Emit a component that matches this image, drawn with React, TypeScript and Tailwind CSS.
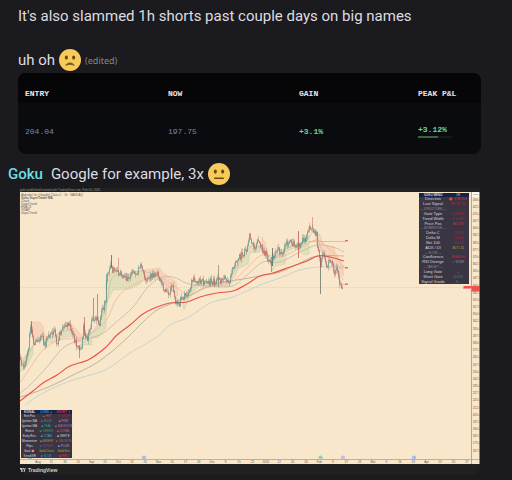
import React from "react";

type Pt = [number, number];

const price: Pt[] = [
  [20, 360], [25, 365], [29, 350], [31, 325], [34, 342], [42, 337], [46, 345], [49, 335], [55, 332], [57, 346],
  [62, 328], [69, 323], [73, 335], [78, 346], [82, 347], [84, 327], [88, 340], [93, 318], [97, 318], [100, 322],
  [103, 308], [106, 303], [107, 277], [111, 267], [115, 272], [120, 273], [127, 278], [131, 277], [133, 270],
  [136, 275], [141, 267], [143, 270], [146, 282], [152, 275], [157, 273], [160, 280], [163, 287], [168, 292],
  [173, 288], [176, 302], [178, 307], [182, 298], [187, 295], [193, 280], [200, 281], [210, 281], [218, 281],
  [223, 278], [230, 281], [233, 268], [238, 258], [243, 255], [248, 248], [250, 235], [254, 247], [258, 243],
  [263, 250], [268, 257], [271, 263], [273, 257], [278, 250], [283, 253], [287, 243], [295, 243], [299, 247],
  [303, 238], [306, 240], [308, 230], [312, 225], [314, 233], [317, 235], [318, 247], [321, 263], [324, 253],
  [327, 265], [331, 260], [335, 272], [338, 268], [340, 285], [343, 285],
];

const spikes = [
  [79, 345, 358, "#4f9a8f"], [111, 255, 268, "#5a4a44"], [118, 258, 272, "#d98478"], [218, 265, 287, "#8a7f72"],
  [298, 231, 258, "#c9483f"], [97, 294, 320, "#b2665c"], [93, 298, 318, "#6f7f75"], [312, 217, 228, "#d98478"],
  [271, 257, 272, "#4f9a8f"], [272, 248, 266, "#54504b"], [320, 257, 294, "#54645f"], [106, 274, 290, "#4f9a8f"],
  [31, 321, 334, "#c9483f"], [84, 317, 336, "#b2665c"],
] as const;

function priceAt(x: number): number {
  for (let i = 1; i < price.length; i++) {
    if (x <= price[i][0]) {
      const [x0, y0] = price[i - 1];
      const [x1, y1] = price[i];
      return y0 + ((y1 - y0) * (x - x0)) / (x1 - x0);
    }
  }
  return price[price.length - 1][1];
}

function noise(n: number): number {
  const v = Math.sin(n * 127.1) * 43758.5453;
  return v - Math.floor(v);
}

const candles = Array.from({ length: 323 }, (_, i) => {
  const x = 20.5 + i;
  const open = priceAt(x - 0.5) + (noise(i) - 0.5) * 7;
  const close = priceAt(x + 0.5) + (noise(i + 1) - 0.5) * 7;
  return {
    x,
    top: Math.min(open, close),
    bottom: Math.max(open, close) + 0.6,
    high: Math.min(open, close) - noise(i + 400) * 4,
    low: Math.max(open, close) + noise(i + 800) * 4,
    up: close < open,
  };
});

function curve(points: Pt[]): string {
  let d = `M${points[0][0]} ${points[0][1]}`;
  for (let i = 0; i < points.length - 1; i++) {
    const a = points[Math.max(0, i - 1)];
    const b = points[i];
    const c = points[i + 1];
    const e = points[Math.min(points.length - 1, i + 2)];
    d += `C${b[0] + (c[0] - a[0]) / 6} ${b[1] + (c[1] - a[1]) / 6} ${c[0] - (e[0] - b[0]) / 6} ${c[1] - (e[1] - b[1]) / 6} ${c[0]} ${c[1]}`;
  }
  return d;
}

const averages: { color: string; width: number; points: Pt[] }[] = [
  { color: "#c3d0cf", width: 0.9, points: [[25, 405], [43, 393], [70, 381], [105, 370], [130, 353], [157, 337], [170, 325], [189, 317], [210, 303], [233, 297], [260, 285], [280, 278], [300, 270], [320, 267], [344, 266]] },
  { color: "#b3a68f", width: 0.8, points: [[20, 397], [33, 393], [53, 385], [73, 375], [93, 365], [110, 353], [127, 338], [143, 322], [157, 310], [173, 303], [193, 294], [205, 288], [223, 282], [237, 280], [260, 276], [280, 272], [300, 263], [317, 256], [344, 256]] },
  { color: "#c4b69f", width: 0.8, points: [[20, 393], [30, 385], [47, 367], [63, 348], [80, 340], [100, 335], [113, 325], [133, 307], [147, 288], [160, 278], [173, 277], [189, 284], [205, 286], [232, 286], [247, 275], [263, 262], [280, 262], [300, 252], [317, 245], [333, 247], [344, 252]] },
  { color: "#f3b597", width: 0.8, points: [[20, 383], [30, 368], [43, 350], [60, 340], [83, 337], [105, 322], [117, 298], [133, 285], [157, 277], [173, 285], [189, 295], [205, 287], [230, 283], [247, 268], [262, 255], [280, 257], [300, 248], [317, 240], [330, 250], [344, 267]] },
  { color: "#c9b0bd", width: 0.6, points: [[20, 365], [30, 352], [36, 342], [50, 338], [70, 330], [82, 342], [97, 325], [106, 306], [112, 278], [125, 275], [141, 271], [158, 277], [172, 290], [180, 300], [195, 285], [230, 281], [240, 262], [252, 245], [265, 252], [273, 258], [290, 247], [306, 241], [314, 232], [322, 250], [334, 264], [343, 280]] },
  { color: "#ec5145", width: 1.1, points: [[20, 401], [33, 391], [43, 383], [57, 375], [70, 366], [88, 360], [105, 348], [117, 335], [130, 325], [143, 314], [157, 307], [170, 303], [187, 302], [200, 297], [217, 293], [233, 291], [247, 284], [260, 276], [273, 273], [290, 267], [307, 261], [318, 256], [330, 257], [344, 261]] },
];

const greenClouds = [
  "20,362 28,352 33,345 33,354 27,366 20,372",
  "44,342 56,335 68,328 72,336 62,338 52,343",
  "80,345 90,338 100,322 106,303 106,328 98,338 92,338 92,345 82,345",
  "106,285 112,272 125,276 141,270 145,276 140,284 130,289 113,290 107,303 106,315",
  "182,300 190,290 196,281 230,281 230,286 198,286 192,295 188,300 184,310",
  "231,278 238,262 250,247 260,245 260,252 250,253 248,264 236,270 231,280",
  "271,262 278,254 287,246 300,244 309,235 309,254 304,255 296,247 286,252 285,264 276,266 272,271",
];
const redClouds = [
  "31,322 40,322 43,327 44,334 48,338 40,340 33,340",
  "64,325 70,323 80,333 84,338 78,343 71,332",
  "144,270 160,268 163,273 168,276 176,282 178,296 170,290 160,280 146,279",
  "262,237 265,243 268,252 266,256 262,249",
  "314,230 320,235 323,245 334,247 335,252 342,264 344,276 337,270 328,258 318,249",
];

const months = ["Aug", "11", "18", "25", "Sep", "15", "Oct", "13", "20", "Nov", "10", "17", "24", "Dec", "8", "15", "22", "2026", "12", "20", "26", "Feb", "9", "17", "23", "Mar", "9", "16", "23", "Apr", "13", "20", "27"];

function PriceChart() {
  return (
    <svg
      viewBox="19 188 461 277"
      className="block h-auto w-full"
      role="img"
      aria-label="Google price chart"
      fontFamily="'Liberation Sans', Arial, sans-serif"
    >
      <rect x="19" y="188" width="461" height="277" fill="#202120" />
      <text x="20" y="190.5" fontSize="3" fill="#96938d">goku published/created with TradingView.com, Feb 04, 2026</text>
      <rect x="20" y="192" width="460" height="272" fill="#f8e7cb" />
      <g fontSize="3" fill="#67605a">
        <text x="21" y="195.8">Alphabet Inc (Google) Class C · 1h · NASDAQ</text>
        <text x="21" y="198.8" fontWeight="bold">Goku SuperTrader MA</text>
        <text x="21" y="201.8">Cloud</text>
        <text x="21" y="204.8">SuperTrend</text>
        <text x="21" y="207.8">EMA 21</text>
        <text x="21" y="210.8">VWAP</text>
        <text x="21" y="213.8">Gaps/Trend</text>
      </g>
      <path d="M20 287.5H471" stroke="#e9b8a1" strokeWidth="0.6" strokeDasharray="1 1" />
      {greenClouds.map((p) => (
        <polygon key={p} points={p} fill="#a9c88c" fillOpacity="0.28" stroke="#a5c58a" strokeOpacity="0.5" strokeWidth="0.5" />
      ))}
      {redClouds.map((p) => (
        <polygon key={p} points={p} fill="#f39a88" fillOpacity="0.26" stroke="#f09a89" strokeOpacity="0.5" strokeWidth="0.5" />
      ))}
      {averages.map((a) => (
        <path key={a.color} d={curve(a.points)} fill="none" stroke={a.color} strokeWidth={a.width} />
      ))}
      {spikes.map(([x, y0, y1, color]) => (
        <path key={x} d={`M${x + 0.5} ${y0}V${y1}`} stroke={color} strokeWidth="0.7" />
      ))}
      {candles.map((c) => (
        <g key={c.x} stroke={c.up ? "#4b9a90" : "#bd5d56"}>
          <path d={`M${c.x} ${c.high}V${c.low}`} strokeWidth="0.3" stroke="#665c56" />
          <path d={`M${c.x} ${c.top}V${c.bottom}`} strokeWidth="0.6" />
        </g>
      ))}
      <path d="M309 241.5H346M328 268H346M340 284.5H346" stroke="#eda394" strokeWidth="0.7" />
      <g fill="#ec6a60">
        <rect x="345" y="240" width="3" height="1.4" />
        <rect x="345" y="267" width="3" height="1.4" />
        <rect x="345" y="283.4" width="3" height="1.4" />
      </g>
      <path d="M471.5 192V464" stroke="#a99f8c" strokeWidth="0.9" />
      <path d="M20 459.5H480" stroke="#b5aa95" strokeWidth="0.9" />
      <rect x="472" y="192.5" width="7" height="4" fill="#fffdf8" />
      <text x="473" y="195.4" fontSize="2.5" fill="#555">USD</text>
      <g fontSize="3" fill="#5f584f">
        {Array.from({ length: 36 }, (_, i) => (
          <text key={i} x="472.7" y={200.6 + i * 7.17}>{(430 - i * 7.5).toFixed(1)}</text>
        ))}
        {months.map((m, i) => (
          <text key={i} x={38 + i * 13.4} y="463" textAnchor="middle">{m}</text>
        ))}
      </g>
      <rect x="463.5" y="286" width="8" height="3" fill="#ee5351" />
      <rect x="471.5" y="286" width="8.5" height="5.5" fill="#ee5351" />
      <text x="464" y="288.6" fontSize="2.5" fill="#ffe3df">GOOG</text>
      <circle cx="30" cy="457.5" r="2.1" fill="#8fd1c8" />
      <circle cx="144" cy="457.5" r="2.1" fill="#b1b8f0" />
      <circle cx="320.5" cy="457.5" r="2.1" fill="#8fd1c8" />
      <circle cx="343" cy="457.5" r="2.1" fill="#d4b3e3" />
      <circle cx="414" cy="457.5" r="2.1" fill="#a3bbf1" />
      <path d="M479.5 192V464" stroke="#6d675c" strokeWidth="0.8" />
    </svg>
  );
}

const signalRows: [string, string, string][] = [
  ["Direction", "🔴 STRONG", "text-[#d5304a]"],
  ["Last Signal", "SHORT 32", "text-[#b3243c]"],
  ["— STRUCTURE —", "", ""],
  ["Gate Type", "▼ SHORT", "text-[#b3243c]"],
  ["Trend Width", "▼ 0.38%", "text-[#b3243c]"],
  ["Price Pos", "BELOW", "text-[#d5304a]"],
  ["— MOMENTUM —", "", ""],
  ["Delta C", "-120.04", "text-[#b3243c]"],
  ["Delta M", "-163.05", "text-[#b3243c]"],
  ["Net 100", "-190.03", "text-[#b3243c]"],
  ["ADX / DI", "36.7 / 20", "text-[#c5a72b]"],
  ["— FLOW —", "", ""],
  ["Confluence", "BEARISH", "text-[#c0263e]"],
  ["RSI Diverge", "✓ NONE", "text-[#928b91]"],
  ["— TARGET —", "", ""],
  ["Long Gate", "–", "text-[#aaa5ad]"],
  ["Short Gate", "+3.62%", "text-[#2f9b5e]"],
  ["Signal Grade", "B+", "text-[#3179aa]"],
];

const trendRows: [string, string, string, string, string][] = [
  ["Exit Pos", "▲ HIT", "text-[#d4644b]", "▼ STOP", "text-[#a7273b]"],
  ["Ignition MA", "■ BLUE", "text-[#3b82c4]", "■ PINK", "text-[#c978a0]"],
  ["Ignition MA", "■ TEAL", "text-[#32a584]", "■ MAGENTA", "text-[#a965ac]"],
  ["Retest", "■ GREEN", "text-[#2f9a61]", "■ CORAL", "text-[#c8625b]"],
  ["Early Rev.", "■ CYAN", "text-[#31b6cf]", "■ WHITE", "text-[#cfcbd2]"],
  ["Momentum", "■ AMBER", "text-[#b8842f]", "■ SALMON", "text-[#a15b50]"],
  ["Flips", "■ VIOLET", "text-[#755686]", "■ PLUM", "text-[#b497b0]"],
  ["Goal 🎯", "Gold Cross", "text-[#b8ab2d]", "Gold Exit", "text-[#b8ab2d]"],
  ["Trend/SR", "▮ BLUE", "text-[#2d8fdd]", "▮ RED", "text-[#dc3545]"],
];

function SignalTable() {
  return (
    <table className="absolute right-[11px] top-[5px] h-[91px] w-[50px] table-fixed border-collapse bg-[#3a3543] text-center text-[4px] leading-[4px] text-[#dad6dc]">
      <thead>
        <tr className="bg-[#14234a]">
          <th className="w-[28px] whitespace-nowrap p-0 text-[3px]">GOKU MENU</th>
          <th className="p-0 text-[3px] text-[#c5a72b]">1H</th>
        </tr>
      </thead>
      <tbody>
        {signalRows.map(([name, value, color]) => (
          <tr key={name}>
            <td className={value ? "whitespace-nowrap p-0" : "whitespace-nowrap p-0 text-[3px] text-[#908994]"}>{name}</td>
            <td className={`whitespace-nowrap p-0 text-[3px] ${color}`}>{value}</td>
          </tr>
        ))}
      </tbody>
    </table>
  );
}

function TrendTable() {
  return (
    <table className="absolute bottom-[7px] left-[2px] h-[48px] w-[51px] table-fixed border-collapse bg-[#3a3543] text-center text-[3px] leading-[4px] text-[#dad6dc]">
      <thead>
        <tr className="bg-[#14234a]">
          <th className="p-0">SIGNAL</th>
          <th className="p-0 text-[#3b8ad0]">LONG ▲</th>
          <th className="p-0 text-[#c52f43]">SHORT ▼</th>
        </tr>
      </thead>
      <tbody>
        {trendRows.map(([name, long, longColor, short, shortColor], i) => (
          <tr key={i}>
            <td className="whitespace-nowrap p-0">{name}</td>
            <td className={`whitespace-nowrap p-0 ${longColor}`}>{long}</td>
            <td className={`whitespace-nowrap p-0 ${shortColor}`}>{short}</td>
          </tr>
        ))}
      </tbody>
    </table>
  );
}

function Face({ mood }: { mood: "sad" | "neutral" }) {
  return (
    <svg viewBox="0 0 36 36" className="size-[22px] shrink-0" role="img" aria-label={mood === "sad" ? "slightly frowning face" : "neutral face"}>
      <circle cx="18" cy="18" r="18" fill="#f8ca5c" />
      <ellipse cx="12" cy="14" rx="2.5" ry="3.5" fill="#664a13" />
      <ellipse cx="24" cy="14" rx="2.5" ry="3.5" fill="#664a13" />
      {mood === "sad" ? (
        <path d="M11 27c1-2.7 3.5-4.2 7-4.2s6 1.5 7 4.2c-2-1.2-4-1.7-7-1.7s-5 .5-7 1.7z" fill="#664a13" stroke="#664a13" />
      ) : (
        <path d="M11 25h14" stroke="#664a13" strokeWidth="2.4" strokeLinecap="round" />
      )}
    </svg>
  );
}

export default function App() {
  return (
    <main className="min-h-screen bg-[#1b1a1f] font-[Roboto,sans-serif] text-[15px] leading-5 text-[#dddde1]">
      <p className="pl-[18px] pt-[6px]">It's also slammed 1h shorts past couple days on big names</p>
      <p className="flex items-center gap-1 pl-[18px] pt-[23px]">
        <span>uh oh</span>
        <Face mood="sad" />
        <span className="pt-[2px] font-['Noto_Sans',sans-serif] text-[9px] text-[#85858c]">(edited)</span>
      </p>
      <div className="ml-[18px] mr-[31px] mt-[2px] overflow-hidden rounded-lg bg-[#090b0f]">
        <table className="w-full table-fixed border-collapse text-left font-['Liberation_Mono',monospace] text-[8px] leading-[10px]">
          <thead className="bg-[#060609] text-[#e8e8ea]">
            <tr className="h-[30px]">
              <th className="w-[143px] pb-0 pl-[7px] pt-3">ENTRY</th>
              <th className="w-[131px] pb-0 pl-[7px] pt-3">NOW</th>
              <th className="w-[119px] pb-0 pl-[7px] pt-3">GAIN</th>
              <th className="pb-0 pl-[7px] pt-3">PEAK P&amp;L</th>
            </tr>
          </thead>
          <tbody className="text-[#8383a0]">
            <tr className="h-[51px]">
              <td className="pb-0 pl-[7px] pt-[6px]">204.04</td>
              <td className="pb-0 pl-[7px] pt-[6px]">197.75</td>
              <td className="pb-0 pl-[7px] pt-[6px] font-bold text-[#6bd895]">+3.1%</td>
              <td className="pb-0 pl-[7px] pt-[6px] font-bold text-[#6bd895]">
                +3.12%
                <div className="mt-px h-[2px] w-[34px] bg-[#15191a]">
                  <div className="h-full w-3/5 bg-[#3f6140]" />
                </div>
              </td>
            </tr>
          </tbody>
        </table>
      </div>
      <p className="flex items-center pl-2 pt-[9px]">
        <a href="#goku" className="mr-2 font-medium text-[#70dfe0]">Goku</a>
        <span className="mr-1">Google for example, 3x</span>
        <Face mood="neutral" />
      </p>
      <figure className="ml-[19px] mr-8 mt-[3px] overflow-hidden rounded-b-lg bg-[#1f201f] font-['Liberation_Sans',sans-serif]">
        <div className="relative">
          <PriceChart />
          <SignalTable />
          <TrendTable />
        </div>
        <figcaption className="flex h-[10px] items-center gap-[2px] pl-px text-[5px] font-bold leading-none text-[#d2d2d2]">
          <svg viewBox="0 0 12 8" className="h-[4px] w-[6px]" aria-hidden="true">
            <path d="M0 0h5v8H2.5V3H0zM11.5 0 9 8H7l2.5-8z" fill="#d2d2d2" />
            <circle cx="7" cy="1.5" r="1.3" fill="#d2d2d2" />
          </svg>
          TradingView
        </figcaption>
      </figure>
    </main>
  );
}
